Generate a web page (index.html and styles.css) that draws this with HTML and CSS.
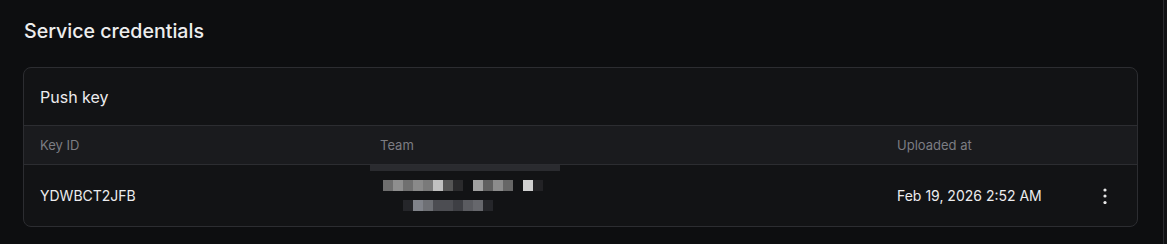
FILE: index.html
```html
<!DOCTYPE html>
<html lang="en">
<head>
<meta charset="utf-8">
<title>Service credentials</title>
<link rel="stylesheet" href="styles.css">
</head>
<body>
<div class="page">
  <main class="content">
    <h1 class="title">Service credentials</h1>
    <section class="card">
      <div class="card-header">Push key</div>
      <div class="row head">
        <div class="cell">Key ID</div>
        <div class="cell">Team</div>
        <div class="cell">Uploaded at</div>
        <div class="cell"></div>
      </div>
      <div class="row body">
        <div class="cell">YDWBCT2JFB</div>
        <div class="cell team">
          <div class="redact-bar"></div>
          <div class="pix-line l1">
            <span style="background:#6e6e6e"></span><span style="background:#8e8e8e"></span><span style="background:#707070"></span><span style="background:#8a8a8a"></span><span style="background:#7a7a7a"></span><span style="background:#c0c0c0"></span><span style="background:#555555"></span><span style="background:#2a2a2c"></span>
            <i></i>
            <span style="background:#a0a0a0"></span><span style="background:#606060"></span><span style="background:#8c8c8c"></span><span style="background:#666666"></span>
            <i></i>
            <span style="background:#d0d0d0"></span><span style="background:#222225"></span>
          </div>
          <div class="pix-line l2">
            <span style="background:#25262a"></span><span style="background:#80838a"></span><span style="background:#6e7075"></span><span style="background:#4c4d52"></span><span style="background:#4c4d52"></span><span style="background:#3e3f44"></span><span style="background:#5a5b60"></span><span style="background:#66676c"></span><span style="background:#25262a"></span>
          </div>
        </div>
        <div class="cell">Feb 19, 2026 2:52 AM</div>
        <div class="cell actions">
          <button class="kebab" aria-label="More actions">
            <svg width="4" height="16" viewBox="0 0 4 16" fill="#e6e6e6"><circle cx="2" cy="2" r="1.6"/><circle cx="2" cy="8" r="1.6"/><circle cx="2" cy="14.5" r="1.6"/></svg>
          </button>
        </div>
      </div>
    </section>
  </main>
  <div class="edge"></div>
</div>
</body>
</html>
```
FILE: styles.css
```css
* { box-sizing: border-box; }
html, body {
  margin: 0;
  padding: 0;
  background: #0d0e10;
  height: 100%;
}
body {
  font-family: Inter, "Noto Sans", "Liberation Sans", sans-serif;
  color: #ececee;
  overflow: hidden;
}
.page {
  display: flex;
  height: 244px;
}
.content {
  width: 1164px;
  padding: 17px 25px 0 23px;
  border-right: 1px solid #2a2b2f;
}
.edge {
  flex: 1;
  background: #111214;
}
.title {
  margin: 0 0 22px 1px;
  font-size: 19.6px;
  line-height: 28px;
  font-weight: 500;
  color: #ededee;
}
.card {
  border: 1px solid #2c2d31;
  border-radius: 8px;
  background: #121315;
  overflow: hidden;
}
.card-header {
  height: 58px;
  display: flex;
  align-items: center;
  padding-left: 16px;
  font-size: 16px;
  font-weight: 400;
  color: #ececee;
  border-bottom: 1px solid #2c2d31;
}
.row {
  display: grid;
  grid-template-columns: 340px 517px 1fr 32px;
  padding: 0 16px;
  align-items: center;
}
.row.head {
  height: 39px;
  background: #1a1b1e;
  border-bottom: 1px solid #2c2d31;
  font-size: 13px;
  color: #7c7d83;
}
.row.body {
  height: 61px;
  font-size: 14px;
  font-weight: 400;
  color: #ececee;
}
.team {
  position: relative;
  height: 61px;
  display: flex;
  flex-direction: column;
  justify-content: flex-start;
  padding-top: 15px;
  gap: 9px;
}
.redact-bar {
  position: absolute;
  left: -10px;
  top: 0;
  width: 190px;
  height: 6px;
  background: #2a2b2f;
}
.pix-line {
  display: flex;
  height: 11px;
}
.pix-line span {
  display: block;
  width: 10px;
  height: 11px;
}
.pix-line i {
  display: block;
  width: 10px;
}
.pix-line.l1 { margin-left: 3px; }
.pix-line.l2 { margin-left: 23px; }
.actions {
  display: flex;
  justify-content: center;
}
.kebab {
  background: none;
  border: 0;
  padding: 0;
  width: 20px;
  height: 24px;
  display: flex;
  align-items: center;
  justify-content: center;
  cursor: pointer;
}
```
